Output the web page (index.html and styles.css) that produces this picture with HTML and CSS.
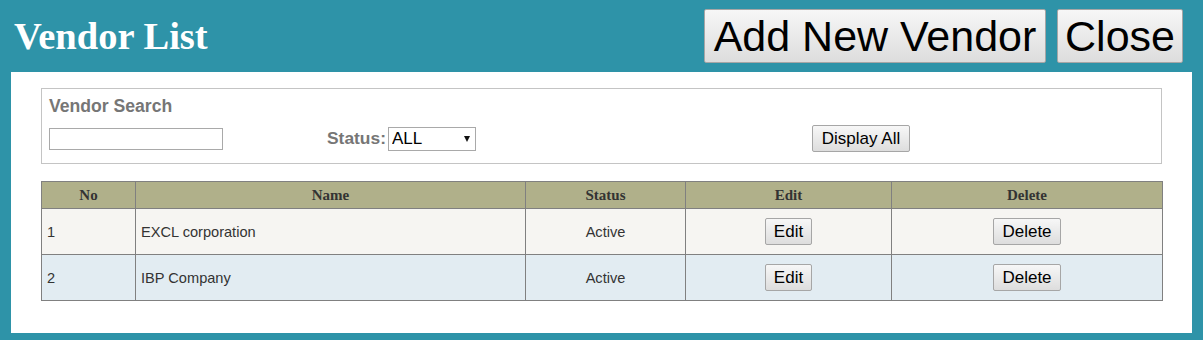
FILE: index.html
```html
<!DOCTYPE html>
<html>
<head>
<meta charset="utf-8">
<title>Vendor List</title>
<link rel="stylesheet" href="styles.css">
</head>
<body>
<header class="topbar">
  <h1 class="title">Vendor List</h1>
  <div class="top-actions">
    <button class="btn btn-big btn-add">Add New Vendor</button>
    <button class="btn btn-big btn-close">Close</button>
  </div>
</header>
<main class="panel">
  <section class="search">
    <div class="search-title">Vendor Search</div>
    <div class="search-row">
      <div><input class="search-input" type="text"></div>
      <div class="status-field">
        <label class="status-label">Status:</label>
        <span class="select-wrap">
          <select class="status-select"><option>ALL</option><option>Active</option><option>Inactive</option></select>
        </span>
      </div>
      <div><button class="btn btn-display">Display All</button></div>
    </div>
  </section>
  <table class="grid">
    <colgroup>
      <col class="c-no"><col class="c-name"><col class="c-status"><col class="c-edit"><col class="c-delete">
    </colgroup>
    <thead>
      <tr><th>No</th><th>Name</th><th>Status</th><th>Edit</th><th>Delete</th></tr>
    </thead>
    <tbody>
      <tr class="row-odd">
        <td>1</td><td>EXCL corporation</td><td class="center">Active</td>
        <td class="center"><button class="btn btn-row">Edit</button></td>
        <td class="center"><button class="btn btn-row">Delete</button></td>
      </tr>
      <tr class="row-even">
        <td>2</td><td>IBP Company</td><td class="center">Active</td>
        <td class="center"><button class="btn btn-row">Edit</button></td>
        <td class="center"><button class="btn btn-row">Delete</button></td>
      </tr>
    </tbody>
  </table>
</main>
</body>
</html>
```

FILE: styles.css
```css
html, body {
  margin: 0;
  padding: 0;
}
body {
  background: #2e93a8;
  width: 1203px;
  height: 340px;
  overflow: hidden;
  font-family: "Liberation Sans", Arial, sans-serif;
}
.topbar {
  height: 72px;
  display: flex;
  align-items: flex-start;
  justify-content: space-between;
}
.title {
  margin: 0;
  padding: 14px 0 0 14px;
  font-family: "Liberation Serif", "Times New Roman", serif;
  font-weight: bold;
  font-size: 38.5px;
  line-height: 44px;
  color: #ffffff;
}
.top-actions {
  display: flex;
  gap: 11px;
  padding: 9px 20px 0 0;
}
.btn {
  font-family: "Liberation Sans", Arial, sans-serif;
  color: #000;
  background: linear-gradient(#f7f7f7, #dddddd);
  border: 1px solid #a6a6a6;
  border-radius: 2px;
  margin: 0;
  cursor: pointer;
  box-sizing: border-box;
}
.btn-big {
  height: 54px;
  font-size: 43px;
  line-height: 50px;
  padding: 0 6px;
}
.btn-add { width: 342px; }
.btn-close { width: 126px; }
.panel {
  margin: 0 11px;
  height: 261px;
  box-sizing: border-box;
  background: #ffffff;
  padding: 16px 30px 0 30px;
}
.search {
  border: 1px solid #c4c4c4;
  height: 76px;
  box-sizing: border-box;
  padding: 7px 7px 0 7px;
}
.search-title {
  font-size: 17.6px;
  line-height: 20px;
  font-weight: bold;
  color: #767676;
}
.search-row {
  margin-top: 9px;
  display: grid;
  grid-template-columns: 278px 485px auto;
  align-items: center;
  height: 27px;
}
.search-input {
  display: block;
  width: 174px;
  height: 22px;
  box-sizing: border-box;
  border: 1px solid #a9a9a9;
  margin: 0;
  padding: 1px 3px;
  font-size: 15px;
}
.status-field {
  display: flex;
  align-items: center;
  gap: 2px;
}
.status-label {
  font-size: 17.4px;
  font-weight: bold;
  color: #767676;
}
.select-wrap {
  position: relative;
  display: inline-block;
}
.select-wrap::after {
  content: "";
  position: absolute;
  right: 6px;
  top: 9px;
  border-left: 3.5px solid transparent;
  border-right: 3.5px solid transparent;
  border-top: 6px solid #111;
  pointer-events: none;
}
.status-select {
  display: block;
  -webkit-appearance: none;
  appearance: none;
  width: 88px;
  height: 24px;
  box-sizing: border-box;
  border: 1px solid #a9a9a9;
  border-radius: 0;
  background: #fff;
  color: #000;
  font-family: "Liberation Sans", Arial, sans-serif;
  font-size: 17px;
  padding: 0 0 0 3px;
  margin: 0;
}
.btn-display {
  width: 98px;
  height: 27px;
  font-size: 17px;
  line-height: 23px;
  padding: 0 6px;
}
.grid {
  margin-top: 17px;
  width: 1121px;
  border-collapse: collapse;
  table-layout: fixed;
  border: 1px solid #808080;
}
.c-no { width: 94px; }
.c-name { width: 390px; }
.c-status { width: 160px; }
.c-edit { width: 206px; }
.c-delete { width: 271px; }
.grid th {
  background: #b0b08a;
  border: 1px solid #808080;
  height: 26px;
  padding: 0;
  font-family: "Liberation Serif", "Times New Roman", serif;
  font-size: 15px;
  font-weight: bold;
  color: #333333;
  text-align: center;
}
.grid td {
  border: 1px solid #808080;
  height: 45px;
  padding: 0 0 0 5px;
  font-size: 14.6px;
  color: #333333;
  text-align: left;
}
.grid td.center {
  text-align: center;
  padding: 0;
}
.row-odd td { background: #f6f5f2; }
.row-even td { background: #e2ecf2; }
.btn-row {
  height: 27px;
  font-size: 17px;
  line-height: 23px;
  padding: 0 8px;
  vertical-align: middle;
}
```
